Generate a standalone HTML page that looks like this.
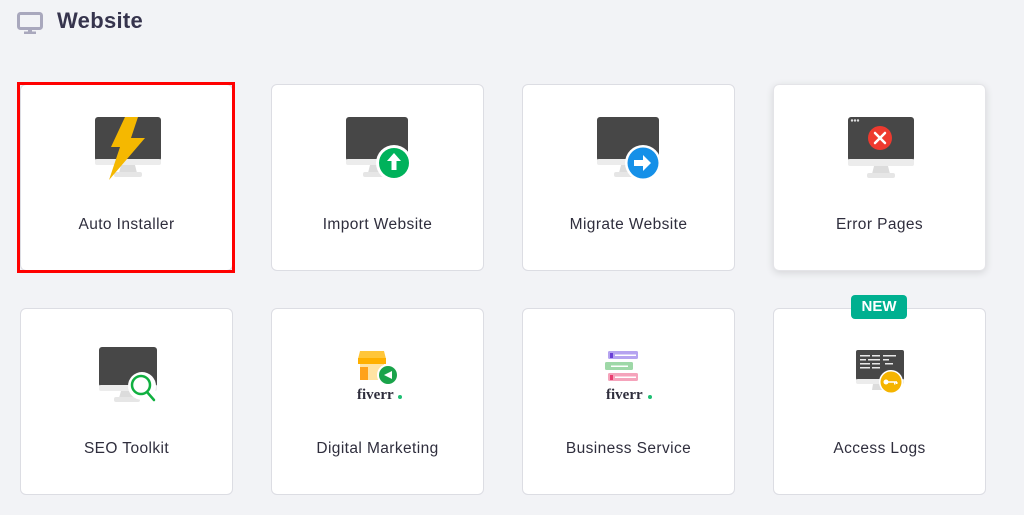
<!DOCTYPE html>
<html><head><style>
body{margin:0;width:1024px;height:515px;background:#f2f3f6;font-family:"Liberation Sans",sans-serif;position:relative;overflow:hidden;color:#36344d}
.h{position:absolute;left:57px;top:8px;font-size:22px;font-weight:bold;color:#36344d;letter-spacing:0.3px}
.card{position:absolute;width:213px;height:187px;background:#fff;border:1px solid #dcdde3;border-radius:6px;box-sizing:border-box}
.card .t{position:absolute;left:0;right:0;text-align:center;top:131px;font-size:15.5px;letter-spacing:0.4px;color:#2f2e3d}
.card svg{position:absolute;left:71px;top:30px}
.sel{position:absolute;left:17px;top:82px;width:218px;height:191px;border:3px solid #f00;box-sizing:border-box}
.new{position:absolute;left:851px;top:295px;width:56px;height:24px;background:#00b090;border-radius:4px;color:#fff;font-weight:bold;font-size:15px;text-align:center;line-height:24px}
</style></head><body>
<svg style="position:absolute;left:17px;top:12px" width="26" height="22" viewBox="0 0 26 22"><rect x="1.5" y="1.5" width="23" height="15" rx="2" fill="none" stroke="#a9a8bd" stroke-width="3"/><rect x="11" y="17" width="4" height="3" fill="#a9a8bd"/><rect x="7" y="19.5" width="12" height="2.5" fill="#a9a8bd"/></svg>
<div class="h">Website</div>

<div class="card" style="left:20px;top:84px"><svg width="72" height="70" viewBox="0 0 72 70"><rect x="3" y="2" width="66" height="44" rx="3" fill="#474747"/><rect x="3" y="44" width="66" height="6" rx="2" fill="#ececec"/><path d="M29 50h14l2 8h-18z" fill="#dcdcdc"/><rect x="22" y="57" width="28" height="5" rx="2" fill="#e6e6e6"/><path d="M33 2h13l-7 21h14l-36 42 11-33h-9z" fill="#f5b800"/></svg><div class="t">Auto Installer</div></div>
<div class="sel"></div>

<div class="card" style="left:271px;top:84px"><svg width="72" height="70" viewBox="0 0 72 70"><rect x="3" y="2" width="62" height="44" rx="3" fill="#474747"/><rect x="3" y="44" width="62" height="6" rx="2" fill="#ececec"/><path d="M27 50h12l2 8h-16z" fill="#dcdcdc"/><rect x="20" y="57" width="26" height="5" rx="2" fill="#e6e6e6"/><circle cx="51" cy="48" r="18" fill="#fff"/><circle cx="51" cy="48" r="15" fill="#00b25b"/><path d="M51 38l-7 8h4.5v9h5v-9h4.5z" fill="#fff"/></svg><div class="t">Import Website</div></div>

<div class="card" style="left:522px;top:84px"><svg width="72" height="70" viewBox="0 0 72 70"><rect x="3" y="2" width="62" height="44" rx="3" fill="#474747"/><rect x="3" y="44" width="62" height="6" rx="2" fill="#ececec"/><path d="M27 50h12l2 8h-16z" fill="#dcdcdc"/><rect x="20" y="57" width="26" height="5" rx="2" fill="#e6e6e6"/><circle cx="49" cy="48" r="18" fill="#fff"/><circle cx="49" cy="48" r="15.5" fill="#1590e8"/><path d="M40 45h9v-5l8 8-8 8v-5h-9z" fill="#fff"/></svg><div class="t">Migrate Website</div></div>

<div class="card" style="left:773px;top:84px;box-shadow:0 2px 8px rgba(0,0,0,.12);border-color:#e4e4e8"><svg width="72" height="70" viewBox="0 0 72 70"><rect x="3" y="2" width="66" height="44" rx="3" fill="#474747"/><circle cx="7" cy="5.5" r="1.2" fill="#ddd"/><circle cx="10" cy="5.5" r="1.2" fill="#ddd"/><circle cx="13" cy="5.5" r="1.2" fill="#ddd"/><rect x="3" y="44" width="66" height="7" rx="2" fill="#ececec"/><path d="M29 51h14l2 8h-18z" fill="#dcdcdc"/><rect x="22" y="58" width="28" height="5" rx="2" fill="#e6e6e6"/><circle cx="35" cy="23" r="12" fill="#ee3a2f"/><path d="M30 18l10 10M40 18l-10 10" stroke="#fff" stroke-width="2.5" stroke-linecap="round"/></svg><div class="t">Error Pages</div></div>

<div class="card" style="left:20px;top:308px"><svg width="72" height="70" viewBox="0 0 72 70"><rect x="7" y="8" width="58" height="40" rx="3" fill="#474747"/><rect x="7" y="46" width="58" height="6" rx="2" fill="#ececec"/><path d="M29 52h12l2 7h-16z" fill="#dcdcdc"/><rect x="22" y="58" width="26" height="5" rx="2" fill="#e6e6e6"/><circle cx="50" cy="47" r="14" fill="#fff"/><circle cx="49" cy="46" r="9" fill="#fff" stroke="#10b040" stroke-width="2.5"/><path d="M55 53l7 8" stroke="#10b040" stroke-width="2.5" stroke-linecap="round"/></svg><div class="t">SEO Toolkit</div></div>

<div class="card" style="left:271px;top:308px"><svg width="72" height="70" viewBox="0 0 72 70"><path d="M17 12h24l2 8H15z" fill="#ffc63a"/><rect x="15" y="19" width="28" height="6" fill="#ffb000"/><rect x="17" y="25" width="24" height="16" fill="#ffe3a3"/><rect x="17" y="28" width="8" height="13" fill="#ffa21a"/><circle cx="45" cy="36" r="11" fill="#fff"/><circle cx="45" cy="36" r="9" fill="#1aa34a"/><path d="M41 36l8-4v8z" fill="#fff"/><text x="14" y="60" font-family="Liberation Serif" font-weight="bold" font-size="15" fill="#2f2e3d">fiverr</text><circle cx="57" cy="58" r="2" fill="#1dbf73"/></svg><div class="t">Digital Marketing</div></div>

<div class="card" style="left:522px;top:308px"><svg width="72" height="70" viewBox="0 0 72 70"><rect x="14" y="12" width="30" height="8" rx="1.5" fill="#b5a3f0"/><rect x="16" y="14" width="3" height="5" fill="#6a3fd6"/><rect x="21" y="15.5" width="21" height="1.5" fill="#fff"/><rect x="11" y="23" width="28" height="8" rx="1.5" fill="#9ed8a7"/><rect x="17" y="26.5" width="17" height="1.5" fill="#fff"/><rect x="14" y="34" width="30" height="8" rx="1.5" fill="#f5a3bb"/><rect x="16" y="36" width="3" height="5" fill="#e83d6f"/><rect x="21" y="37.5" width="21" height="1.5" fill="#fff"/><text x="12" y="60" font-family="Liberation Serif" font-weight="bold" font-size="15" fill="#2f2e3d">fiverr</text><circle cx="56" cy="58" r="2" fill="#1dbf73"/></svg><div class="t">Business Service</div></div>

<div class="card" style="left:773px;top:308px"><svg width="72" height="70" viewBox="0 0 72 70"><rect x="11" y="11" width="48" height="30" rx="2" fill="#474747"/><g fill="#e8e8e8"><rect x="15" y="16" width="10" height="1.5"/><rect x="27" y="16" width="8" height="1.5"/><rect x="38" y="16" width="13" height="1.5"/><rect x="15" y="20" width="6" height="1.5"/><rect x="23" y="20" width="12" height="1.5"/><rect x="38" y="20" width="6" height="1.5"/><rect x="15" y="24" width="10" height="1.5"/><rect x="27" y="24" width="8" height="1.5"/><rect x="40" y="24" width="8" height="1.5"/><rect x="15" y="28" width="10" height="1.5"/><rect x="27" y="28" width="8" height="1.5"/></g><rect x="11" y="40" width="48" height="5" rx="2" fill="#ececec"/><path d="M28 45h10l1 6H27z" fill="#dcdcdc"/><circle cx="46" cy="43" r="12" fill="#fff"/><circle cx="46" cy="43" r="10.5" fill="#f5b400"/><circle cx="41" cy="43" r="2.5" fill="#fff"/><path d="M43 42.2h9v1.6h-9zM49 43h1.5v2.5H49zM51 43h1.5v2H51z" fill="#fff"/></svg><div class="t">Access Logs</div></div>
<div class="new">NEW</div>
</body></html>
